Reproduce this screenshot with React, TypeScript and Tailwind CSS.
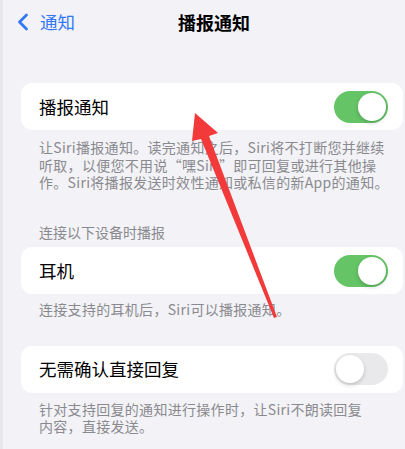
import { ChevronLeft } from "lucide-react";

const font = { fontFamily: '"Noto Sans CJK SC", "Noto Sans", sans-serif' };

function Toggle({ on }: { on: boolean }) {
  return (
    <div
      className={
        on
          ? "w-[54px] h-[32px] rounded-full bg-[#65c466] p-[2px] flex justify-end"
          : "w-[54px] h-[32px] rounded-full bg-[#e9e9eb] p-[2px] flex justify-start"
      }
    >
      <div className="w-[28px] h-[28px] rounded-full bg-white shadow-[0_2px_4px_rgba(0,0,0,0.18)]" />
    </div>
  );
}

function Row({ label, on }: { label: string; on: boolean }) {
  return (
    <div className="ml-[18px] mr-[2px] h-[47px] bg-white rounded-[11px] flex items-center justify-between pl-[18px] pr-[15px]">
      <span className="text-[17.5px] text-black leading-none">{label}</span>
      <Toggle on={on} />
    </div>
  );
}

export default function App() {
  return (
    <div
      className="relative w-[405px] h-[449px] overflow-hidden bg-[#f2f2f7] border-l-[3px] border-[#e8e8ec]"
      style={font}
    >
      <header className="relative h-[44px] flex items-center">
        <div className="flex items-center text-[#3478f6] pl-[6px]">
          <ChevronLeft size={28} strokeWidth={2.4} />
          <span className="text-[17.5px] ml-[3px]">通知</span>
        </div>
        <h1 className="absolute left-0 right-0 text-center text-[18px] font-semibold text-black pl-[20px]">
          播报通知
        </h1>
      </header>

      <div className="mt-[39px]">
        <Row label="播报通知" on />
        <p className="pt-[9px] pl-[36px] text-[14px] leading-[17.5px] text-[#8a8a8e] tracking-[0.3px] whitespace-nowrap">
          让Siri播报通知。读完通知之后，Siri将不打断您并继续
          <br />
          听取，以便您不用说“嘿Siri”即可回复或进行其他操
          <br />
          作。Siri将播报发送时效性通知或私信的新App的通知。
        </p>

        <p className="mt-[32px] mb-[6px] pl-[36px] text-[14px] leading-[17.5px] text-[#8a8a8e]">
          连接以下设备时播报
        </p>
        <Row label="耳机" on />
        <p className="pt-[7px] pl-[36px] text-[14px] leading-[17.5px] text-[#8a8a8e] tracking-[0.3px] whitespace-nowrap">
          连接支持的耳机后，Siri可以播报通知。
        </p>

        <div className="mt-[27px]">
          <Row label="无需确认直接回复" on={false} />
        </div>
        <p className="pt-[8px] pl-[36px] text-[14px] leading-[17.5px] text-[#8a8a8e] tracking-[0.3px] whitespace-nowrap">
          针对支持回复的通知进行操作时，让Siri不朗读回复
          <br />
          内容，直接发送。
        </p>
      </div>

      {/* annotation arrow */}
      <svg className="absolute left-0 top-0 pointer-events-none" width="405" height="449">
        <polygon
          points="192,113 215,133 206,136 274,317 271,318 198,139 189,141"
          fill="#f23a3a"
        />
      </svg>
    </div>
  );
}
